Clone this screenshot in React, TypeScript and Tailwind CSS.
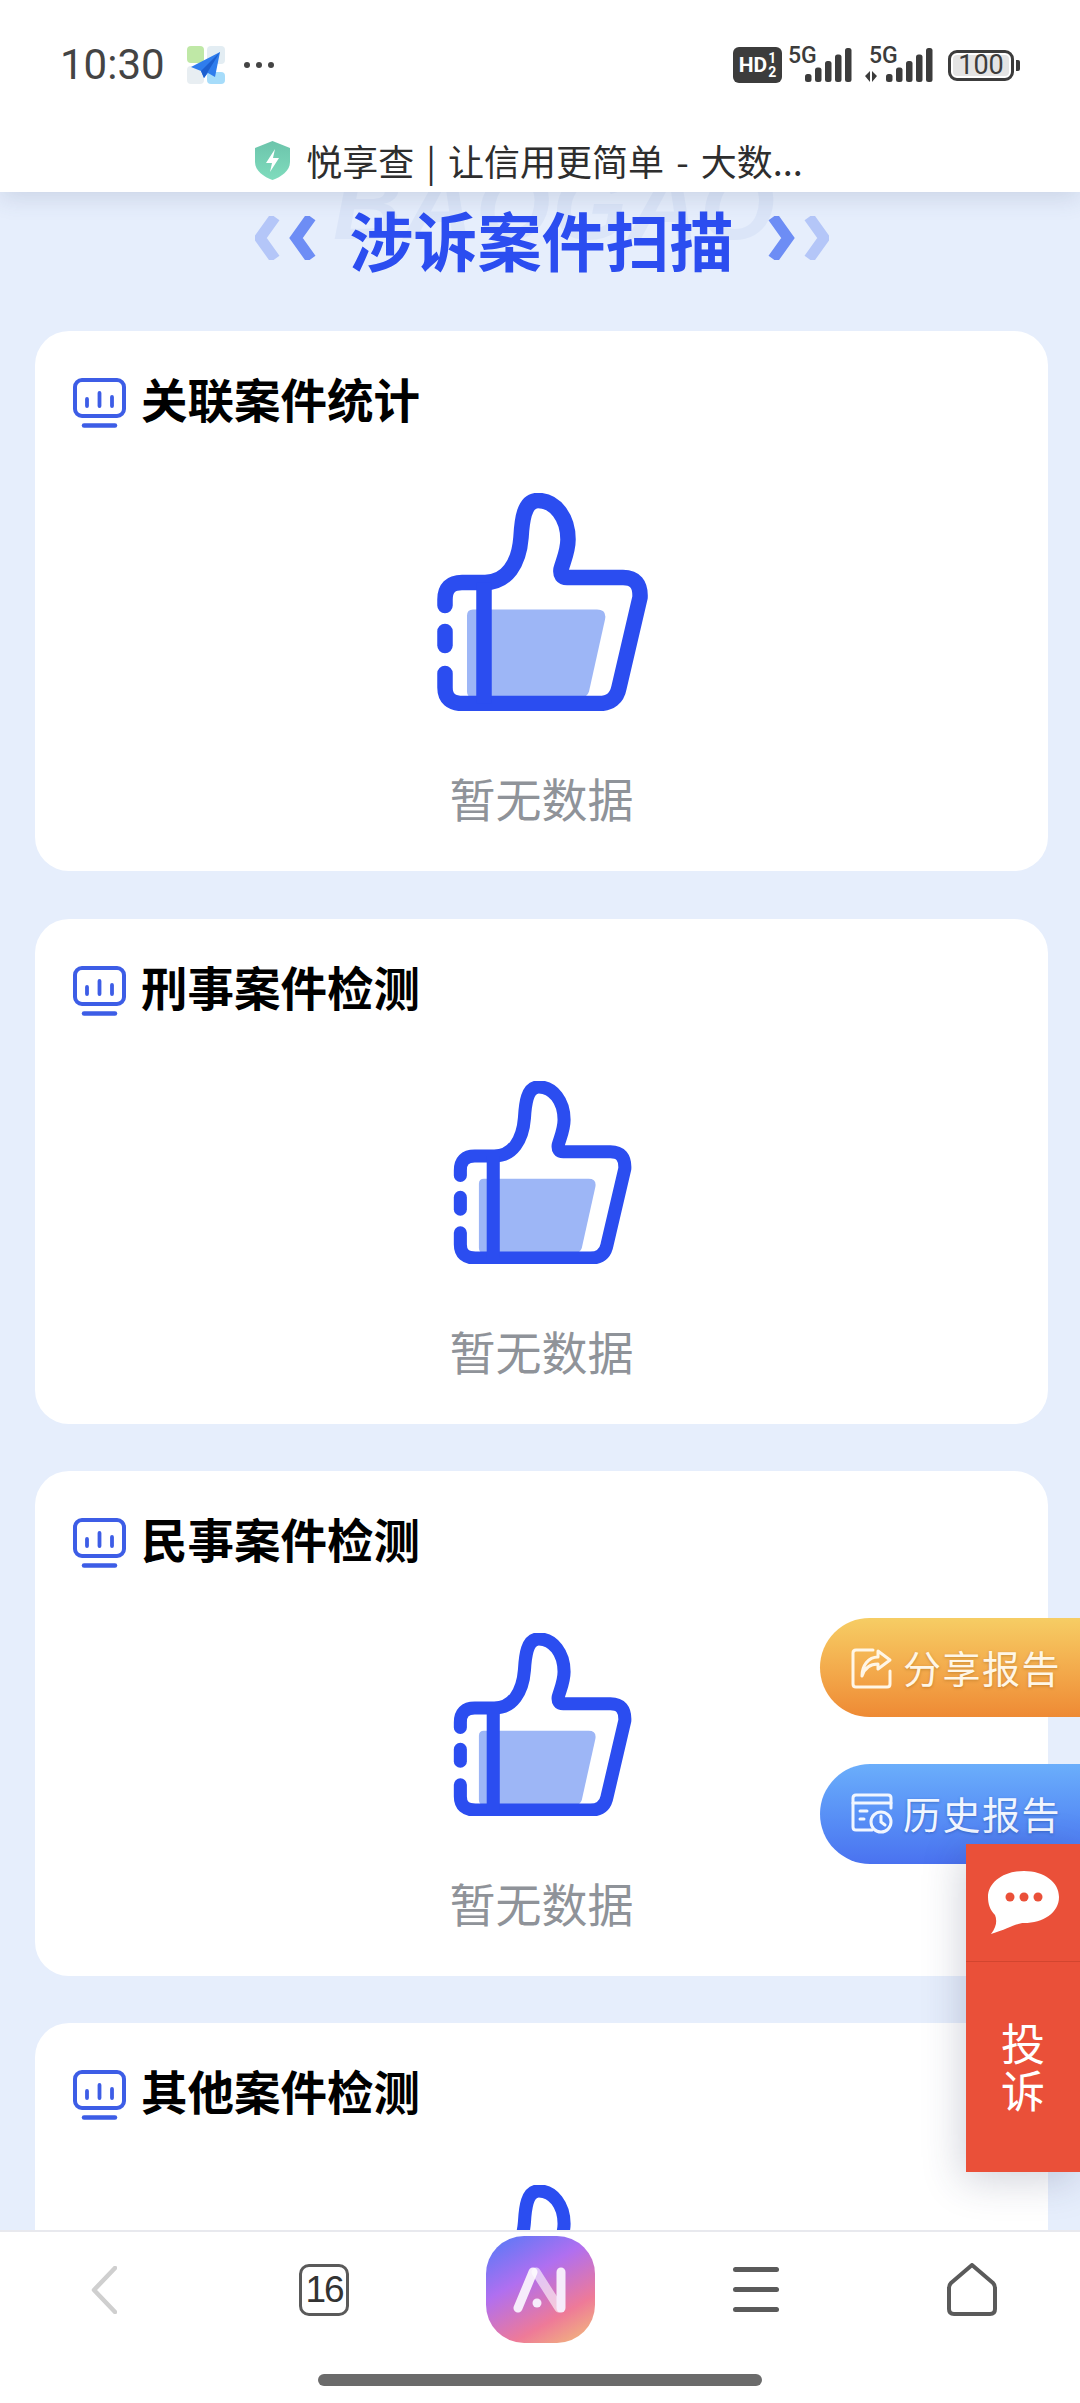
import React from 'react';

const cjk = "font-['Noto_Sans_CJK_SC',sans-serif]";

const ThumbIcon = ({ className }: { className: string }) => (
  <svg className={className} viewBox="0 0 212 217" fill="none">
    <path d="M30 122 Q30 116 36 116 H160 Q170 116 168 126 L152 198 Q150 204 144 204 H36 Q30 204 30 198 Z" fill="#9db6f6" />
    <path
      d="M8 112 V106 Q8 89 25 89 H48 C70 89 82 70 84 44 C85 26 87 7 101 7 C118 7 131 24 131 46 C131 58 126 68 124 76 Q123 84 130 84 H186 Q204 84 203 104 L182 194 Q179 210 162 210 H26 Q8 210 8 194 V180"
      stroke="#2b4df0"
      strokeWidth="15.5"
      strokeLinecap="round"
      strokeLinejoin="round"
    />
    <path d="M8 138 V152" stroke="#2b4df0" strokeWidth="15.5" strokeLinecap="round" />
    <path d="M47 89 V210" stroke="#2b4df0" strokeWidth="15.5" />
  </svg>
);

const ChartIcon = () => (
  <svg className="w-[53px] h-[50px] shrink-0" viewBox="0 0 53 50" fill="none">
    <rect x="2" y="2" width="49" height="36" rx="7" stroke="#3d5de6" strokeWidth="4" />
    <path d="M14 21 V28 M26.5 15 V28 M39 19 V28" stroke="#3d5de6" strokeWidth="3.8" strokeLinecap="round" />
    <path d="M11 47.5 H42" stroke="#3d5de6" strokeWidth="4.5" strokeLinecap="round" />
  </svg>
);

const CaseCard = ({ title, big }: { title: string; big?: boolean }) => (
  <section className={`bg-white rounded-[34px] pt-[47px] pb-[51px] px-[38px] ${big ? 'mb-[1px]' : ''}`}>
    <div className="flex items-center gap-[15px] h-[50px]">
      <ChartIcon />
      <h3 className={`${cjk} text-[46.5px] leading-[46px] font-bold text-black -mt-[10px]`}>{title}</h3>
    </div>
    <div className="flex flex-col items-center mt-[65px]">
      <ThumbIcon className={big ? 'w-[212px] h-[218px] ml-[2px]' : 'w-[180px] h-[183px] ml-[2px]'} />
      <p className={`${cjk} text-[46px] leading-[46px] text-[#8f9399] mt-[63px]`}>暂无数据</p>
    </div>
  </section>
);

const Signal = ({ extra }: { extra?: boolean }) => (
  <svg className={extra ? 'w-[68px] h-[38px]' : 'w-[64px] h-[38px]'} viewBox={extra ? '0 0 68 38' : '0 0 64 38'} fill="#3c3c3c">
    <text x={extra ? 4 : 0} y="17" fontSize="23" fontWeight="500" fontFamily="Roboto, sans-serif">5G</text>
    {extra && <path d="M0 30 L5 25 V36 Z M7 25 L12 30 L7 36 Z" />}
    {[0, 1, 2, 3, 4].map((i) => (
      <rect key={i} x={(extra ? 21 : 17) + i * 10} y={28 - i * 6.5} width="6.5" height={8 + i * 6.5} rx="2.5" />
    ))}
  </svg>
);

const Chevrons = ({ flip }: { flip?: boolean }) => (
  <svg className={`w-[64px] h-[44px] ${flip ? '-scale-x-100' : ''}`} viewBox="0 0 64 44" fill="none">
    <path d="M20 1 L5 22 L20 43" stroke="#b4c6f8" strokeWidth="11" strokeLinejoin="miter" />
    <path d="M56 1 L41 22 L56 43" stroke="#6d8df5" strokeWidth="11" strokeLinejoin="miter" />
  </svg>
);

export default function App() {
  return (
    <div className="relative w-[1080px] h-[2403px] overflow-hidden flex flex-col bg-[#e6eefc]">
      {/* status bar + page title */}
      <header className="relative z-10 h-[192px] shrink-0 bg-white shadow-[0_6px_22px_rgba(60,80,120,0.16)]">
        <div className="flex items-center justify-between h-[130px] pl-[60px] pr-[60px]">
          <div className="flex items-center">
            <span className="font-['Roboto',sans-serif] text-[42px] leading-none text-[#444]">10:30</span>
            <svg className="w-[38px] h-[38px] ml-[22px]" viewBox="0 0 38 38">
              <rect x="0" y="0" width="17" height="17" rx="4" fill="#bfe8a6" />
              <rect x="20" y="0" width="18" height="18" rx="4" fill="#e3edf3" />
              <rect x="0" y="20" width="17" height="18" rx="4" fill="#e8eef2" />
              <rect x="20" y="26" width="18" height="12" rx="4" fill="#a6dcfa" />
              <path d="M33 6 L4 21 L14 25 L17 32 L21 27 L28 31 Z" fill="#2f7ded" />
              <path d="M33 6 L14 25 L17 32 Z" fill="#1c5fcf" />
            </svg>
            <span className="flex gap-[6px] ml-[19px]">
              <i className="w-[6px] h-[6px] rounded-full bg-[#444]" />
              <i className="w-[6px] h-[6px] rounded-full bg-[#444]" />
              <i className="w-[6px] h-[6px] rounded-full bg-[#444]" />
            </span>
          </div>
          <div className="flex items-center">
            <div className="flex items-center justify-center gap-[1px] w-[49px] h-[36px] rounded-[6px] bg-[#3c3c3c] text-white font-['Roboto',sans-serif] font-bold">
              <span className="text-[21px] leading-none">HD</span>
              <span className="flex flex-col text-[14px] leading-[14px]"><span>1</span><span>2</span></span>
            </div>
            <div className="ml-[6px]"><Signal /></div>
            <div className="ml-[13px]"><Signal extra /></div>
            <div className="ml-[15px] flex items-center">
              <div className="w-[66px] h-[31px] rounded-[9px] border-[3px] border-[#3c3c3c] p-[2px] flex">
                <span className="flex-1 rounded-[4px] bg-[#e4e4e4] flex items-center justify-center font-['Roboto',sans-serif] text-[27px] leading-none text-[#3c3c3c]">100</span>
              </div>
              <i className="w-[4px] h-[11px] rounded-r-[2px] bg-[#3c3c3c] ml-[2px]" />
            </div>
          </div>
        </div>
        <div className="flex items-center justify-center gap-[16px] h-[40px] mt-[10px] pr-[22px]">
          <svg className="w-[35px] h-[39px]" viewBox="0 0 35 39">
            <defs>
              <linearGradient id="shield" x1="0" y1="0" x2="0" y2="1">
                <stop offset="0" stopColor="#6cc4ab" />
                <stop offset="1" stopColor="#7fdcbd" />
              </linearGradient>
            </defs>
            <path d="M17.5 0 L35 7 V21 C35 30 26 36 17.5 39 C9 36 0 30 0 21 V7 Z" fill="url(#shield)" />
            <path d="M20 8 L11 22 H17 L15 31 L24 17 H18 Z" fill="#fff" />
          </svg>
          <span className={`${cjk} text-[36px] leading-[40px] text-[#2e2e2e] [word-spacing:4px]`}>悦享查 | 让信用更简单 - 大数...</span>
        </div>
      </header>

      {/* scrolling page */}
      <main className="flex-1 min-h-0 overflow-hidden pl-[35px] pr-[32px]">
        <div className="relative flex items-center justify-center h-[139px] pb-[48px] gap-[31px]">
          <span className="absolute left-[298px] -top-[34px] font-['Liberation_Sans',sans-serif] italic font-bold text-[96px] leading-none tracking-[2px] text-[#dbe5f8]">BAOGAO</span>
          <Chevrons />
          <h2 className={`relative ${cjk} text-[64px] leading-[70px] font-bold text-[#2b4df0]`}>涉诉案件扫描</h2>
          <Chevrons flip />
        </div>
        <div className="flex flex-col gap-[47px]">
          <CaseCard title="关联案件统计" big />
          <CaseCard title="刑事案件检测" />
          <CaseCard title="民事案件检测" />
          <CaseCard title="其他案件检测" />
        </div>
      </main>

      {/* floating actions */}
      <div className="absolute right-0 top-[1618px] flex flex-col gap-[47px] w-[260px]">
        <button className="h-[99px] rounded-l-[50px] bg-gradient-to-b from-[#f6cd64] to-[#ee8a34] flex items-center pl-[31px] gap-[10px] text-[#fff6e6]">
          <svg className="w-[42px] h-[42px]" viewBox="0 0 42 42" fill="none" stroke="currentColor" strokeWidth="3" strokeLinecap="round" strokeLinejoin="round">
            <path d="M22 3 H5 Q2 3 2 6 V37 Q2 40 5 40 H36 Q39 40 39 37 V24" />
            <path d="M27 4 L39 13 L27 22 V17 C20 17 14 20 11 29 C11 19 17 10 27 10 Z" />
          </svg>
          <span className={`${cjk} text-[38px] leading-none tracking-[1.5px] -mt-[2px] [text-shadow:0_1px_3px_rgba(120,70,0,0.35)]`}>分享报告</span>
        </button>
        <button className="h-[100px] rounded-l-[50px] bg-gradient-to-b from-[#6baefb] to-[#4a72f0] flex items-center pl-[31px] gap-[10px] text-[#f1f6ff]">
          <svg className="w-[42px] h-[42px]" viewBox="0 0 42 42" fill="none" stroke="currentColor" strokeWidth="3" strokeLinecap="round">
            <path d="M21 37 H5 Q2 37 2 34 V5 Q2 2 5 2 H37 Q40 2 40 5 V15" />
            <path d="M2 10 H40 M9 18 H16 M9 26 H13" />
            <circle cx="30" cy="29" r="10" />
            <path d="M30 23 V29 L34 32" />
          </svg>
          <span className={`${cjk} text-[38px] leading-none tracking-[1.5px] -mt-[2px] [text-shadow:0_1px_3px_rgba(0,40,120,0.35)]`}>历史报告</span>
        </button>
      </div>

      <aside className="absolute right-0 top-[1844px] w-[114px] h-[328px] bg-[#ea5039] shadow-[-4px_8px_40px_rgba(40,50,90,0.22)] flex flex-col text-white">
        <div className="h-[118px] flex items-center justify-center border-b border-[#d2452f]">
          <svg className="w-[71px] h-[63px]" viewBox="0 0 71 63">
            <path d="M36 0 C56 0 71 11 71 26 C71 42 55 52 36 52 C29 52 20 58 3 63 C9 55 9 49 7 44 C2 39 0 33 0 26 C0 11 16 0 36 0 Z" fill="#fff" />
            <circle cx="22" cy="26" r="4.5" fill="#ea5039" />
            <circle cx="36" cy="26" r="4.5" fill="#ea5039" />
            <circle cx="50" cy="26" r="4.5" fill="#ea5039" />
          </svg>
        </div>
        <div className={`${cjk} flex flex-col items-center pt-[57px] text-[44px] leading-[47px]`}>
          <span>投</span>
          <span>诉</span>
        </div>
      </aside>

      {/* browser toolbar */}
      <footer className="relative z-10 h-[173px] shrink-0 bg-white border-t-2 border-[#e8e9ee]">
        <div className="flex items-start h-[115px]">
          <div className="w-[216px] h-[115px] flex items-center justify-center">
            <svg className="w-[27px] h-[48px] -ml-[10px]" viewBox="0 0 27 48" fill="none">
              <path d="M25 2 L4 24 L25 46" stroke="#cfcfcf" strokeWidth="4.5" strokeLinecap="round" strokeLinejoin="round" />
            </svg>
          </div>
          <div className="w-[216px] h-[115px] flex items-center justify-center">
            <div className="w-[50px] h-[52px] rounded-[10px] border-[3.5px] border-[#5a5a5a] flex items-center justify-center font-['Liberation_Sans',sans-serif] text-[37px] leading-none tracking-[-2px] text-[#333]">16</div>
          </div>
          <div className="w-[216px] h-[115px] flex items-center justify-center">
            <div className="w-[109px] h-[107px] rounded-[38px] bg-[linear-gradient(150deg,#6478f6_8%,#b06ff0_38%,#ee7a98_72%,#f2c178_100%)] flex items-center justify-center">
              <svg className="w-[54px] h-[46px]" viewBox="0 0 54 46" fill="none" strokeLinecap="round">
                <path d="M5 41 L20 5" stroke="#f6ecfb" strokeWidth="9" />
                <path d="M23 5 L46 41" stroke="#ffffff" strokeOpacity="0.6" strokeWidth="9" />
                <path d="M48 5 V41" stroke="#f6ecfb" strokeWidth="9" />
                <circle cx="24" cy="36" r="4.5" fill="#f6ecfb" />
              </svg>
            </div>
          </div>
          <div className="w-[216px] h-[115px] flex flex-col items-center justify-center gap-[15px]">
            <i className="w-[46px] h-[5px] rounded-full bg-[#5a5a5a]" />
            <i className="w-[46px] h-[5px] rounded-full bg-[#5a5a5a]" />
            <i className="w-[46px] h-[5px] rounded-full bg-[#5a5a5a]" />
          </div>
          <div className="w-[216px] h-[115px] flex items-center justify-center">
            <svg className="w-[50px] h-[53px]" viewBox="0 0 50 53" fill="none">
              <path d="M25 2 L46 20 Q48 22 48 25 V46 Q48 51 43 51 H7 Q2 51 2 46 V25 Q2 22 4 20 Z" stroke="#5a5a5a" strokeWidth="4" strokeLinejoin="round" />
            </svg>
          </div>
        </div>
        <div className="flex justify-center mt-[27px]">
          <i className="w-[444px] h-[12px] rounded-full bg-[#6b6b6b]" />
        </div>
      </footer>
    </div>
  );
}
